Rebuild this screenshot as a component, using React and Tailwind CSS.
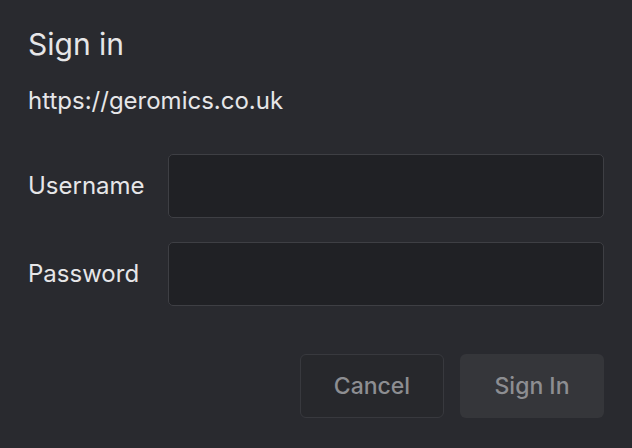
export default function App() {
  return (
    <div
      className="w-[632px] h-[448px] bg-[#292a2f] text-[#e6e6e8] px-[28px] pt-[26px] flex flex-col"
      style={{ fontFamily: "Inter, 'Liberation Sans', sans-serif" }}
    >
      <h1 className="text-[30px] leading-[36px] font-normal">Sign in</h1>
      <p className="mt-[25px] text-[24px] leading-[28px]">https://geromics.co.uk</p>

      <div className="mt-[39px] flex flex-col gap-[24px]">
        <Field label="Username" />
        <Field label="Password" type="password" />
      </div>

      <div className="mt-[48px] flex justify-end gap-[16px]">
        <button className="w-[144px] h-[64px] rounded-[6px] border border-[#38393e] bg-[#27282c] text-[23px] font-medium text-[#8d8e92]">
          Cancel
        </button>
        <button className="w-[144px] h-[64px] rounded-[6px] bg-[#35363a] text-[23px] font-medium text-[#8d8e92]">
          Sign In
        </button>
      </div>
    </div>
  );
}

function Field({ label, type = "text" }) {
  return (
    <div className="flex items-center">
      <label className="w-[140px] text-[24px]">{label}</label>
      <input
        type={type}
        className="flex-1 h-[64px] rounded-[5px] border border-[#3e3f44] bg-[#202125] outline-none"
      />
    </div>
  );
}
